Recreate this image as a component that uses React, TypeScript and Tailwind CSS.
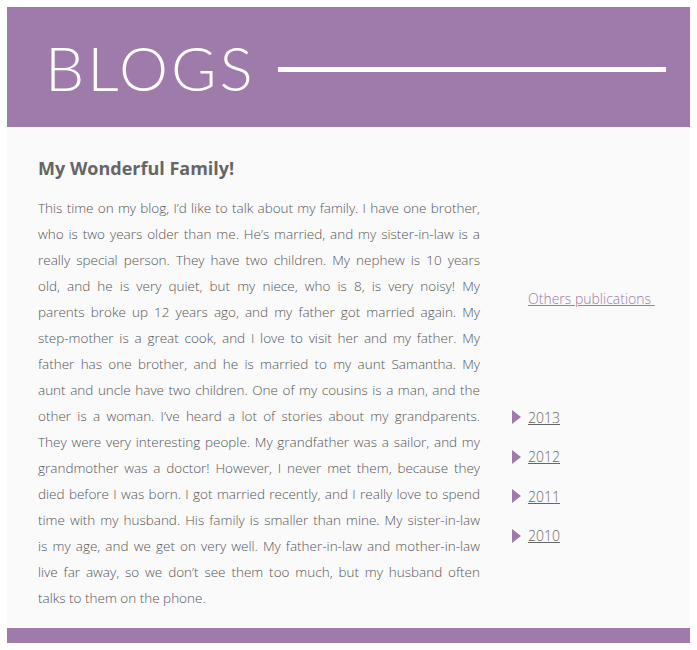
const years = ["2013", "2012", "2011", "2010"];

const lines = [
  "This time on my blog, I’d like to talk about my family. I have one brother,",
  "who is two years older than me. He’s married, and my sister-in-law is a",
  "really special person. They have two children. My nephew is 10 years",
  "old, and he is very quiet, but my niece, who is 8, is very noisy! My",
  "parents broke up 12 years ago, and my father got married again. My",
  "step-mother is a great cook, and I love to visit her and my father. My",
  "father has one brother, and he is married to my aunt Samantha. My",
  "aunt and uncle have two children. One of my cousins is a man, and the",
  "other is a woman. I’ve heard a lot of stories about my grandparents.",
  "They were very interesting people. My grandfather was a sailor, and my",
  "grandmother was a doctor! However, I never met them, because they",
  "died before I was born. I got married recently, and I really love to spend",
  "time with my husband. His family is smaller than mine. My sister-in-law",
  "is my age, and we get on very well. My father-in-law and mother-in-law",
  "live far away, so we don’t see them too much, but my husband often",
];

export default function App() {
  return (
    <div className="w-[697px] h-[650px] bg-white p-[7px] font-['Open_Sans',sans-serif]">
      {/* Header */}
      <div className="h-[120px] bg-[#9e7bab] flex items-center pl-[38px] pr-[24px]">
        <h1 className="text-[62px] leading-none font-light text-white tracking-[3px] font-['Lato','Open_Sans',sans-serif]">
          BLOGS
        </h1>
        <div className="flex-1 h-[5px] bg-white ml-[22px] mt-[4px]" />
      </div>

      {/* Content */}
      <div className="h-[501px] bg-[#fafafa] flex">
        <article className="w-[442px] ml-[31px] pt-[28px] text-[#666]">
          <h2 className="text-[18px] font-bold leading-[26px]">My Wonderful Family!</h2>
          <div className="mt-[14px] text-[13.5px] font-light leading-[26px] text-[#555]">
            {lines.map((l) => (
              <p key={l} className="whitespace-nowrap text-justify [text-align-last:justify]">
                {l}
              </p>
            ))}
            <p>talks to them on the phone.</p>
          </div>
        </article>

        {/* Sidebar */}
        <aside className="flex-1 pl-[48px] pt-[160px] text-[14px] font-light">
          <a href="#" className="block text-[#9e7bab] underline leading-[24px]">
            Others publications&nbsp;
          </a>
          <ul className="mt-[94px] -ml-[16px] flex flex-col gap-[15px]">
            {years.map((y) => (
              <li key={y} className="flex items-center gap-[7px] h-[24.5px]">
                <svg width="9" height="14" viewBox="0 0 9 14">
                  <polygon points="0,0 9,7 0,14" fill="#9e7bab" />
                </svg>
                <a href="#" className="text-[#666] underline">
                  {y}
                </a>
              </li>
            ))}
          </ul>
        </aside>
      </div>

      {/* Footer */}
      <div className="h-[15px] bg-[#9e7bab]" />
    </div>
  );
}
